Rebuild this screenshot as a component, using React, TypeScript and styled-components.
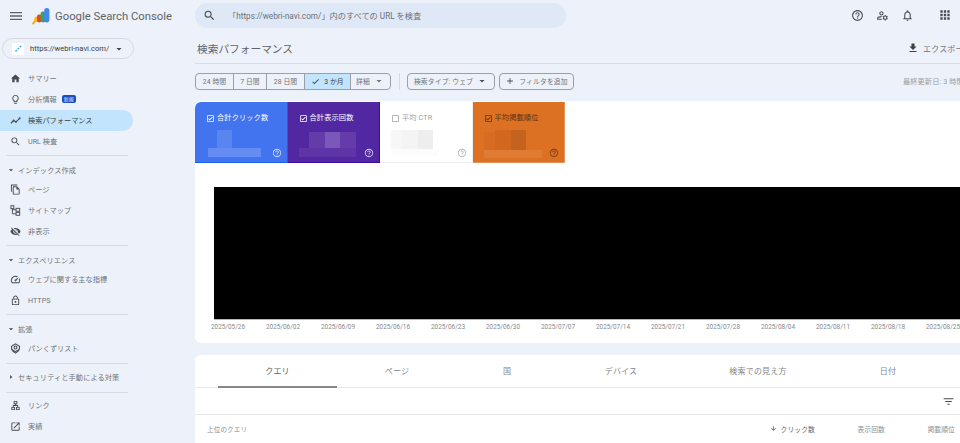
import React from "react";
import styled, { createGlobalStyle } from "styled-components";
import {
  MdAdd,
  MdApps,
  MdArrowDownward,
  MdArrowDropDown,
  MdCheck,
  MdCheckBoxOutlineBlank,
  MdFileDownload,
  MdFilterList,
  MdHelpOutline,
  MdHome,
  MdLightbulbOutline,
  MdMenu,
  MdOpenInNew,
  MdOutlineCheckBox,
  MdOutlineFileCopy,
  MdOutlineHttps,
  MdOutlineLan,
  MdOutlineManageAccounts,
  MdOutlineNotifications,
  MdOutlinePerson,
  MdOutlineSpeed,
  MdSearch,
  MdVisibilityOff,
} from "react-icons/md";

const FONT = `Roboto, "Noto Sans CJK JP", "Noto Sans", sans-serif`;

const GlobalStyle = createGlobalStyle`
  html, body {
    margin: 0;
    padding: 0;
    height: 443px;
    overflow: hidden;
    background: #edf1f9;
    font-family: ${FONT};
  }
  * { box-sizing: border-box; }
`;

const Page = styled.div`
  display: flex;
  width: 960px;
  height: 443px;
  overflow: hidden;
  background: #edf1f9;
  color: #5f6368;
`;

/* sidebar */
const Sidebar = styled.aside`
  flex: 0 0 195px;
  height: 443px;
  overflow: hidden;
`;

const Brand = styled.div`
  display: flex;
  align-items: center;
  height: 32px;
  padding: 0 0 0 8px;
  color: #5f6368;
`;

const LogoMark = styled.svg`
  margin: 0 4px 0 7px;
`;

const BrandName = styled.span`
  font-family: Roboto, sans-serif;
  font-size: 11.3px;
  white-space: nowrap;
`;

const Property = styled.div`
  display: flex;
  align-items: center;
  width: 132px;
  height: 21px;
  margin: 6px 0 8.5px 2px;
  padding: 0 8px 0 9px;
  border: 1px solid #d5d9df;
  border-radius: 11px;
  font-size: 7.6px;
  color: #3c4043;
`;

const Favicon = styled.span`
  display: flex;
  align-items: center;
  justify-content: center;
  width: 12px;
  height: 12px;
  margin-right: 6px;
  background: #fff;
`;

const PropertyUrl = styled.span`
  flex: 1;
  white-space: nowrap;
`;

const NavItem = styled.div<{ $active?: boolean }>`
  display: flex;
  align-items: center;
  width: 133px;
  height: 21px;
  padding-left: 10px;
  border-radius: ${(p) => (p.$active ? "0 11px 11px 0" : "0")};
  background: ${(p) => (p.$active ? "#c2e4fc" : "transparent")};
  font-size: 7.2px;
  color: ${(p) => (p.$active ? "#3c4043" : "#70757a")};
  white-space: nowrap;

  svg {
    flex: 0 0 11px;
    margin-right: 7px;
    color: #45494e;
  }
`;

const NewBadge = styled.span`
  margin-left: 5px;
  padding: 0 2px;
  border-radius: 2px;
  background: #1a4dc4;
  color: #e6edff;
  font-size: 5px;
  line-height: 8px;
`;

const NavRule = styled.div<{ $before?: number; $after?: number }>`
  width: 122px;
  height: 1px;
  margin: ${(p) => p.$before ?? 3.5}px 0 ${(p) => p.$after ?? 0}px 6px;
  background: #d7dbe1;
`;

const NavSection = styled.div`
  display: flex;
  align-items: center;
  height: 22.5px;
  padding: 4.5px 0 0 7px;
  font-size: 7.2px;
  letter-spacing: 0.1px;
  color: #70757a;
  white-space: nowrap;

  svg {
    flex: 0 0 10px;
    margin: 0 2px 0 -1px;
    color: #3c4043;
  }
`;

/* main column */
const Main = styled.main`
  flex: 1;
  min-width: 0;
  overflow: hidden;
`;

const TopBar = styled.div`
  display: flex;
  align-items: center;
  height: 29px;
  padding-top: 1px;
`;

const SearchBox = styled.div`
  display: flex;
  align-items: center;
  width: 371px;
  height: 25px;
  padding-left: 8px;
  border-radius: 12.5px;
  background: #dfe8f7;
  font-size: 8.2px;
  color: #6b7075;
  white-space: nowrap;

  svg {
    margin-right: 12px;
    color: #45494e;
  }
`;

const TopIcons = styled.div`
  display: flex;
  align-items: center;
  margin-left: 285px;
  color: #4a4e53;
`;

const TopIcon = styled.span<{ $gap: number }>`
  display: flex;
  margin-right: ${(p) => p.$gap}px;
`;

const TitleRow = styled.div`
  display: flex;
  align-items: center;
  justify-content: space-between;
  width: 775px;
  height: 35px;
  padding: 4px 0 0 2px;
  border-bottom: 1px solid #d9dde3;
`;

const Title = styled.h1`
  margin: 0;
  font-size: 10.7px;
  font-weight: 400;
  color: #5f6368;
  white-space: nowrap;
`;

const ExportAction = styled.div`
  display: flex;
  align-items: center;
  width: 63px;
  overflow: hidden;
  font-size: 8px;
  letter-spacing: 0.2px;
  color: #70757a;
  white-space: nowrap;

  svg {
    flex: 0 0 12px;
    margin-right: 4px;
    color: #3c4043;
  }
`;

const FilterRow = styled.div`
  display: flex;
  align-items: center;
  width: 775px;
  height: 37px;
  padding-bottom: 3px;
  white-space: nowrap;
`;

const DateGroup = styled.div`
  display: flex;
  height: 17px;
  border: 1px solid #9aa0a6;
  border-radius: 4px;
  overflow: hidden;
`;

const DateOption = styled.div<{ $on?: boolean; $w: number }>`
  display: flex;
  align-items: center;
  justify-content: center;
  width: ${(p) => p.$w}px;
  border-left: 1px solid #9aa0a6;
  background: ${(p) => (p.$on ? "#c2e4fc" : "transparent")};
  font-size: 6.8px;
  letter-spacing: 0.1px;
  color: ${(p) => (p.$on ? "#3c4043" : "#70757a")};

  &:first-child {
    border-left: 0;
  }
  svg {
    flex: none;
  }
`;

const FilterSep = styled.div`
  width: 1px;
  height: 17px;
  margin: 0 7px 0 8px;
  background: #d7dbe1;
`;

const FilterChip = styled.div<{ $w: number }>`
  display: flex;
  align-items: center;
  justify-content: center;
  width: ${(p) => p.$w}px;
  height: 17px;
  margin-right: 4px;
  border: 1px solid #9aa0a6;
  border-radius: 4px;
  font-size: 6.8px;
  letter-spacing: 0.15px;
  color: #70757a;

  svg {
    flex: none;
    color: #4a4e53;
  }
`;

const Updated = styled.div`
  width: 67px;
  margin-left: auto;
  overflow: hidden;
  font-size: 7.2px;
  letter-spacing: 0.1px;
  color: #9aa0a6;
`;

const ChartCard = styled.section`
  width: 775px;
  height: 242px;
  border-radius: 6px 0 0 6px;
  background: #fff;
  overflow: hidden;
`;

const Tiles = styled.div`
  display: flex;
  height: 62px;
  padding-top: 1px;
`;

const Tile = styled.div<{ $bg: string; $edge: string; $fg: string; $first?: boolean }>`
  position: relative;
  flex: 0 0 92.5px;
  height: 61px;
  padding: 11px 0 0 10px;
  background: ${(p) => p.$bg};
  border-bottom: 1px solid ${(p) => p.$edge};
  border-right: 1px solid ${(p) => p.$edge};
  border-top-left-radius: ${(p) => (p.$first ? "6px" : "0")};
  color: ${(p) => p.$fg};
`;

const TileLabel = styled.div`
  display: flex;
  align-items: center;
  font-size: 7.2px;
  letter-spacing: 0.15px;
  line-height: 10px;
  white-space: nowrap;

  svg {
    flex: 0 0 9px;
    margin: 0 2px 0 1px;
  }
`;

const Mosaic = styled.svg`
  display: block;
  margin: 7px 0 0 1px;
`;

const TileHelp = styled.span`
  position: absolute;
  right: 5px;
  bottom: 4px;
  display: flex;
  opacity: 0.75;
`;

const Plot = styled.div`
  width: 746px;
  height: 133px;
  margin: 24px 0 0 19px;
  background: #000;
  border-bottom: 1px solid #b5b8bc;
`;

const Axis = styled.div`
  display: flex;
  margin: 3px 0 0 16px;
`;

const AxisLabel = styled.span`
  flex: 0 0 55px;
  font-size: 6.4px;
  line-height: 9px;
  color: #85898e;
  white-space: nowrap;
`;

const TableCard = styled.section`
  width: 775px;
  height: 100px;
  margin-top: 12px;
  border-radius: 6px 0 0 0;
  background: #fff;
  overflow: hidden;
`;

const Tabs = styled.div`
  display: flex;
  height: 33px;
  padding-left: 23px;
  border-bottom: 1px solid #e6e8eb;
`;

const Tab = styled.div<{ $w: number; $on?: boolean }>`
  flex: 0 0 ${(p) => p.$w}px;
  height: 33px;
  padding-top: 3px;
  line-height: 28px;
  text-align: center;
  font-size: 8px;
  letter-spacing: 0.2px;
  color: ${(p) => (p.$on ? "#5f6368" : "#80868b")};
  border-bottom: 2px solid ${(p) => (p.$on ? "#85898e" : "transparent")};
`;

const TableTools = styled.div`
  display: flex;
  align-items: center;
  justify-content: flex-end;
  height: 27px;
  padding: 0 15.5px 0 0;
  border-bottom: 1px solid #e6e8eb;
  color: #45494e;
`;

const TableHead = styled.div`
  display: flex;
  align-items: center;
  height: 27px;
  padding: 0 15px 0 12px;
  font-size: 6.6px;
  letter-spacing: 0.1px;
  color: #8a8f94;
  white-space: nowrap;
`;

const HeadSpacer = styled.div`
  flex: 1;
`;

const HeadCol = styled.div<{ $on?: boolean }>`
  display: flex;
  align-items: center;
  justify-content: flex-end;
  width: 70px;
  color: ${(p) => (p.$on ? "#5f6368" : "#8a8f94")};
  font-size: 6.8px;
  svg {
    margin-right: 4px;
    color: #3c4043;
  }
`;

const Logo = () => (
  <LogoMark width="20" height="18" viewBox="0 0 25 22">
    <path d="M2.5 20.5l4-5" stroke="#f3a712" strokeWidth="2.2" strokeLinecap="round" />
    <circle cx="7.5" cy="15" r="3.4" fill="#fbbc04" />
    <rect x="7.5" y="9" width="6" height="10" rx="2.6" fill="#ea4335" />
    <rect x="12" y="5.5" width="6.5" height="13.5" rx="3" fill="#34a853" />
    <rect x="16.5" y="1" width="6.5" height="18" rx="3.2" fill="#4285f4" />
  </LogoMark>
);

const Pin = () => (
  <svg width="9" height="9" viewBox="0 0 9 9">
    <path d="M1.5 7.5L7.5 1.5" stroke="#35b6c9" strokeWidth="1.4" strokeDasharray="2 1" />
  </svg>
);

const TrendIcon = () => (
  <svg width="11" height="11" viewBox="0 0 12 12">
    <path d="M1 9l3-3 2.5 1.5L11 3.5" fill="none" stroke="currentColor" strokeWidth="1.2" />
    <circle cx="4" cy="6" r="1" fill="currentColor" />
    <circle cx="6.5" cy="7.5" r="1" fill="currentColor" />
    <circle cx="10.5" cy="3.5" r="1" fill="currentColor" />
  </svg>
);

const SitemapIcon = () => (
  <svg width="11" height="11" viewBox="0 0 12 12" fill="none" stroke="currentColor" strokeWidth="1">
    <rect x="1" y="0.8" width="3.2" height="3.2" />
    <rect x="6.6" y="3.6" width="4" height="3.2" />
    <rect x="6.6" y="8" width="4" height="3.2" />
    <path d="M2.6 4v5.6h4M2.6 5.2h4" />
  </svg>
);

const CrumbIcon = () => (
  <svg width="11" height="11" viewBox="0 0 12 12" fill="none" stroke="currentColor" strokeWidth="1.1">
    <path d="M6 1l4.3 2.5v3.2L6 9.5 1.7 6.7V3.5z" />
    <circle cx="6" cy="5" r="1.6" />
    <path d="M2 8l4 3 4-3" />
  </svg>
);

const Dropdown = ({ gap = 3 }: { gap?: number }) => (
  <MdArrowDropDown size={12} style={{ marginLeft: gap }} />
);

type Block = [number, number, number, number, string];

const mosaics: Block[][] = [
  [
    [2, 18, 53, 9, "#648cf3"],
    [11, 0, 15, 18, "#5a85f1"],
  ],
  [
    [0, 18, 57, 9, "#5e34a6"],
    [10, 2, 16, 16, "#643ba9"],
    [26, 2, 15, 16, "#7a57b8"],
    [41, 2, 16, 16, "#643ba9"],
  ],
  [
    [0, 19, 47, 7, "#fcfcfc"],
    [0, 0, 11, 19, "#f7f7f7"],
    [11, 0, 16, 19, "#f4f4f4"],
    [27, 0, 15, 19, "#eeeeee"],
  ],
  [
    [0, 20, 58, 8, "#e07b33"],
    [0, 2, 11, 18, "#d66c22"],
    [11, 0, 16, 20, "#d26820"],
    [27, 0, 15, 20, "#c4621f"],
  ],
];

const tiles = [
  { label: "合計クリック数", bg: "#4174ee", edge: "#1a5ff0", fg: "#ffffff", first: true },
  { label: "合計表示回数", bg: "#5228a2", edge: "#3a0ca0", fg: "#ffffff" },
  { label: "平均 CTR", bg: "#ffffff", edge: "#eeeeee", fg: "#9aa0a6", off: true },
  { label: "平均掲載順位", bg: "#dc7023", edge: "#e4925a", fg: "#5a3216" },
];

const dates = [
  "2025/05/26", "2025/06/02", "2025/06/09", "2025/06/16", "2025/06/23",
  "2025/06/30", "2025/07/07", "2025/07/14", "2025/07/21", "2025/07/28",
  "2025/08/04", "2025/08/11", "2025/08/18", "2025/08/25",
];

const tabs = [
  { label: "クエリ", w: 119, on: true },
  { label: "ページ", w: 120 },
  { label: "国", w: 100 },
  { label: "デバイス", w: 128 },
  { label: "検索での見え方", w: 146 },
  { label: "日付", w: 114 },
];

export default function App() {
  return (
    <>
      <GlobalStyle />
      <Page>
        <Sidebar>
          <Brand>
            <MdMenu size={16} />
            <Logo />
            <BrandName>Google Search Console</BrandName>
          </Brand>
          <Property>
            <Favicon><Pin /></Favicon>
            <PropertyUrl>https://webri-navi.com/</PropertyUrl>
            <MdArrowDropDown size={12} />
          </Property>
          <NavItem><MdHome size={11} />サマリー</NavItem>
          <NavItem><MdLightbulbOutline size={11} />分析情報<NewBadge>新規</NewBadge></NavItem>
          <NavItem $active><TrendIcon />検索パフォーマンス</NavItem>
          <NavItem><MdSearch size={11} />URL 検査</NavItem>
          <NavRule />
          <NavSection><MdArrowDropDown size={10} />インデックス作成</NavSection>
          <NavItem><MdOutlineFileCopy size={11} />ページ</NavItem>
          <NavItem><SitemapIcon />サイトマップ</NavItem>
          <NavItem><MdVisibilityOff size={11} />非表示</NavItem>
          <NavRule />
          <NavSection><MdArrowDropDown size={10} />エクスペリエンス</NavSection>
          <NavItem><MdOutlineSpeed size={11} />ウェブに関する主な指標</NavItem>
          <NavItem><MdOutlineHttps size={11} />HTTPS</NavItem>
          <NavRule />
          <NavSection><MdArrowDropDown size={10} />拡張</NavSection>
          <NavItem><CrumbIcon />パンくずリスト</NavItem>
          <NavRule $before={4} />
          <NavSection><MdArrowDropDown size={10} style={{ transform: "rotate(-90deg)" }} />セキュリティと手動による対策</NavSection>
          <NavRule $before={6} $after={1.5} />
          <NavItem><MdOutlineLan size={11} />リンク</NavItem>
          <NavItem><MdOpenInNew size={11} />実績</NavItem>
          <NavItem><MdOutlinePerson size={11} /></NavItem>
        </Sidebar>

        <Main>
          <TopBar>
            <SearchBox>
              <MdSearch size={13} />
              「https://webri-navi.com/」内のすべての URL を検査
            </SearchBox>
            <TopIcons>
              <TopIcon $gap={12}><MdHelpOutline size={13} /></TopIcon>
              <TopIcon $gap={12}><MdOutlineManageAccounts size={13} /></TopIcon>
              <TopIcon $gap={24}><MdOutlineNotifications size={13} /></TopIcon>
              <TopIcon $gap={0}><MdApps size={14} /></TopIcon>
            </TopIcons>
          </TopBar>

          <TitleRow>
            <Title>検索パフォーマンス</Title>
            <ExportAction><MdFileDownload size={12} />エクスポート</ExportAction>
          </TitleRow>

          <FilterRow>
            <DateGroup>
              <DateOption $w={37}>24 時間</DateOption>
              <DateOption $w={33}>7 日間</DateOption>
              <DateOption $w={38}>28 日間</DateOption>
              <DateOption $w={46} $on><MdCheck size={9} style={{ marginRight: 4 }} />3 か月</DateOption>
              <DateOption $w={40}>詳細<Dropdown /></DateOption>
            </DateGroup>
            <FilterSep />
            <FilterChip $w={88}>検索タイプ: ウェブ<Dropdown /></FilterChip>
            <FilterChip $w={75}><MdAdd size={10} style={{ marginRight: 4 }} />フィルタを追加</FilterChip>
            <Updated>最終更新日: 3 時間前</Updated>
          </FilterRow>

          <ChartCard>
            <Tiles>
              {tiles.map((t, i) => (
                <Tile key={t.label} $bg={t.bg} $edge={t.edge} $fg={t.fg} $first={t.first}>
                  <TileLabel>
                    {t.off ? <MdCheckBoxOutlineBlank size={9} /> : <MdOutlineCheckBox size={9} />}
                    {t.label}
                  </TileLabel>
                  <Mosaic width="60" height="28" viewBox="0 0 60 28">
                    {mosaics[i].map(([x, y, w, h, fill]) => (
                      <rect key={`${x}-${y}`} x={x} y={y} width={w} height={h} fill={fill} />
                    ))}
                  </Mosaic>
                  <TileHelp><MdHelpOutline size={10} /></TileHelp>
                </Tile>
              ))}
            </Tiles>
            <Plot />
            <Axis>
              {dates.map((d) => <AxisLabel key={d}>{d}</AxisLabel>)}
            </Axis>
          </ChartCard>

          <TableCard>
            <Tabs>
              {tabs.map((t) => (
                <Tab key={t.label} $w={t.w} $on={t.on}>{t.label}</Tab>
              ))}
            </Tabs>
            <TableTools><MdFilterList size={13} /></TableTools>
            <TableHead>
              上位のクエリ
              <HeadSpacer />
              <HeadCol $on><MdArrowDownward size={7} />クリック数</HeadCol>
              <HeadCol>表示回数</HeadCol>
              <HeadCol>掲載順位</HeadCol>
            </TableHead>
          </TableCard>
        </Main>
      </Page>
    </>
  );
}
